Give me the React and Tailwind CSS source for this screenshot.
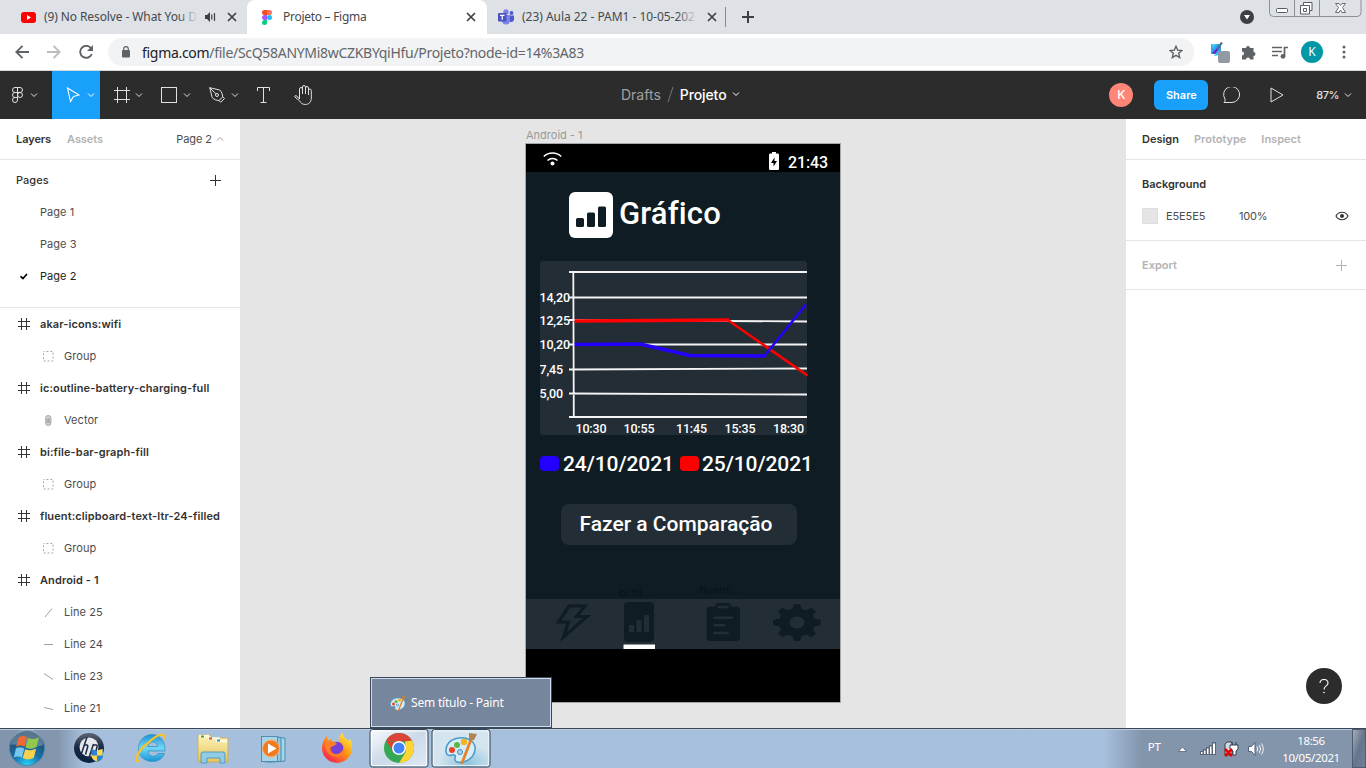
import React from "react";

function Icon({ box, className = "", children }) {
  const [, , w, h] = box.split(" ");
  return (
    <svg viewBox={box} width={w} height={h} fill="none" className={"block shrink-0 " + className}>
      {children}
    </svg>
  );
}

const Close = () => (
  <Icon box="0 0 10 10"><path d="M1 1l8 8M9 1l-8 8" stroke="#3c4043" strokeWidth="1.7" /></Icon>
);

const Chevron = ({ className = "" }) => (
  <Icon box="0 0 8 6" className={className}><path d="M1 1.5l3 3 3-3" stroke="currentColor" /></Icon>
);

const FigmaLogo = () => (
  <Icon box="0 0 10 15">
    <path d="M2.5 0H5v5H2.5a2.5 2.5 0 010-5z" fill="#f24e1e" />
    <path d="M5 0h2.5a2.5 2.5 0 010 5H5z" fill="#ff7262" />
    <path d="M2.5 5H5v5H2.5a2.5 2.5 0 010-5z" fill="#a259ff" />
    <circle cx="7.5" cy="7.5" r="2.5" fill="#1abcfe" />
    <path d="M2.5 10H5v2.5A2.5 2.5 0 112.5 10z" fill="#0acf83" />
  </Icon>
);

function TabStrip() {
  return (
    <div className="flex h-[34px] shrink-0 bg-[#dee1e6] font-['Noto_Sans',sans-serif] text-[12px] text-[#45494d]">
      <div className="flex w-[247px] shrink-0 items-center rounded-br-lg pl-[21px]">
        <Icon box="0 0 15 11">
          <rect width="15" height="11" rx="3" fill="#f00" />
          <path d="M6 3l4 2.5L6 8z" fill="#fff" />
        </Icon>
        <div className="relative ml-2 w-[154px] whitespace-nowrap tracking-[-0.1px]">
          (9) No Resolve - What You D
          <span className="absolute inset-y-0 right-0 w-5 bg-linear-to-r from-transparent to-[#dee1e6]" />
        </div>
        <Icon box="0 0 11 10" className="ml-[7px] mr-3">
          <path d="M0 3h2l3-3v10L2 7H0z" fill="#3c4043" />
          <path d="M6.8 2.5v5M9.5 1v8" stroke="#3c4043" strokeWidth="1.2" />
        </Icon>
        <div className="-ml-px"><Close /></div>
      </div>
      <div className="flex w-[240px] shrink-0 items-center rounded-t-lg bg-white pl-[15px]">
        <FigmaLogo />
        <div className="ml-[11px] w-[183px] whitespace-nowrap tracking-[-0.28px]">Projeto – Figma</div>
        <Close />
      </div>
      <div className="flex w-[239px] shrink-0 items-center rounded-bl-lg pl-[11px]">
        <Icon box="0 0 16 16">
          <circle cx="8" cy="3" r="2.7" fill="#7b83eb" />
          <circle cx="13.5" cy="4" r="1.9" fill="#5059c9" />
          <path d="M11 6.5h5V11a3 3 0 01-5 1z" fill="#5059c9" />
          <path d="M4 6h8v5.500a4 4 0 01-8 0z" fill="#7b83eb" />
          <rect y="4" width="8.500" height="8.500" rx="1" fill="#4b53bc" />
          <path d="M2 6.300h4.500M4.250 6.300V10.800" stroke="#fff" strokeWidth="1.200" />
        </Icon>
        <div className="relative ml-2 w-[175px] whitespace-nowrap tracking-[-0.03px]">
          (23) Aula 22 - PAM1 - 10-05-202
          <span className="absolute inset-y-0 right-0 w-5 bg-linear-to-r from-transparent to-[#dee1e6]" />
        </div>
        <div className="ml-[-7px] flex w-[26px] justify-center pl-[18px]"><Close /></div>
        <div className="ml-[9px] h-5 w-px shrink-0 bg-[#85898e]" />
      </div>
      <div className="flex flex-1 items-center pl-4">
        <Icon box="0 0 12 12"><path d="M6 0v12M0 6h12" stroke="#3c4043" strokeWidth="2" /></Icon>
        <Icon box="0 0 14 14" className="ml-auto">
          <circle cx="7" cy="7" r="7" fill="#3c4043" />
          <path d="M4 5h6L7 9.500z" fill="#fff" />
        </Icon>
        <Icon box="0 0 94 18" className="ml-[15px] mr-[3px] self-start">
          <path d="M.5-1v13.500a4 4 0 004 4H88a4 4 0 004-4V-1" stroke="#8c9096" />
          <path d="M25.500 0v16.500M50.500 0v16.500" stroke="#8c9096" />
          <rect x="7.500" y="8.500" width="11" height="4" rx="1" fill="#fff" stroke="#555b66" />
          <path d="M34.500 2.500h8.500v8h-2.500v3.500h-9V5.500h3z" fill="#fff" stroke="#555b66" />
          <path d="M34.500 5.500h6v5M34.500 8.500h3v3h-3z" stroke="#555b66" />
          <path d="M66.500 3.500h3.500l1.500 2 1.500-2h3.500l-3 4 3 5h-3.500l-1.500-2.500-1.500 2.500h-3.500l3-5z" fill="#fff" stroke="#666b74" />
        </Icon>
      </div>
    </div>
  );
}

function AddressBar() {
  return (
    <div className="flex h-[37px] shrink-0 items-center border-b border-[#d5d8db] bg-white pl-[15px] pr-[20px] font-['Noto_Sans',sans-serif]">
      <Icon box="0 0 14 14"><path d="M14 7H1.500M7.500 .8L1.300 7l6.200 6.200" stroke="#5f6368" strokeWidth="1.900" /></Icon>
      <Icon box="0 0 14 14" className="ml-[18px]"><path d="M0 7h12.500M6.500 .8L12.700 7l-6.200 6.200" stroke="#babcbe" strokeWidth="1.900" /></Icon>
      <Icon box="0 0 14 14" className="ml-[18px]">
        <path d="M12 3.200A6 6 0 1012.800 9" stroke="#5f6368" strokeWidth="1.900" />
        <path d="M14 0v6H8z" fill="#5f6368" />
      </Icon>
      <div className="ml-[15px] flex h-7 w-[1086px] shrink-0 items-center rounded-full bg-[#f1f3f4] pl-[14px] pr-[11px]">
        <Icon box="0 0 8 12">
          <rect y="4" width="8" height="7.500" rx="1" fill="#5f6368" />
          <path d="M1.700 4V3a2.300 2.300 0 014.600 0v1" stroke="#5f6368" strokeWidth="1.200" />
        </Icon>
        <div className="ml-[12px] whitespace-nowrap text-[14px] tracking-[-0.3px] text-[#62666b]">
          <span className="text-[#202124]">figma.com</span>/file/ScQ58ANYMi8wCZKBYqiHfu/Projeto?node-id=14%3A83
        </div>
        <Icon box="0 0 14 14" className="ml-auto"><path d="M7 1.300l1.700 3.800 4.200.4-3.200 2.800 1 4.200L7 10.300l-3.700 2.200 1-4.200L1.100 5.500l4.200-.4z" stroke="#5f6368" strokeWidth="1.400" /></Icon>
      </div>
      <Icon box="0 0 20 21" className="ml-[16px]">
        <rect x="1" y="2" width="10" height="10" fill="#2da7ee" />
        <path d="M2 11l6-6 3-1-6 8z" fill="#6627c9" />
        <path d="M1 2h6L3 6z" fill="#48c7fa" />
        <path d="M12 .5L7 7" stroke="#57718c" strokeWidth="2.200" />
        <path d="M4 14l4-5 1 4z" fill="#19c8f2" />
        <rect x="8" y="9" width="12" height="12" rx="2" fill="#929aa3" />
      </Icon>
      <Icon box="0 0 15 15" className="ml-[11px]"><path d="M1 3h4a2 2 0 114 0h3.500v4a2 2 0 110 4v3.500H9a2 2 0 10-4 0H1v-4a2 2 0 000-4z" fill="#5f6368" /></Icon>
      <Icon box="0 0 17 13" className="ml-[16px]">
        <path d="M0 1.500h10M0 5.500h10M0 9.500h6M12.500 10V1.500H16" stroke="#5f6368" strokeWidth="1.700" />
        <circle cx="11" cy="10.300" r="2.400" fill="#5f6368" />
      </Icon>
      <div className="ml-[12px] flex size-[22px] shrink-0 items-center justify-center rounded-full bg-[#0097a7] text-[12px] text-white">K</div>
      <Icon box="0 0 4 14" className="ml-auto">
        <circle cx="2" cy="2" r="1.500" fill="#5f6368" /><circle cx="2" cy="7" r="1.500" fill="#5f6368" /><circle cx="2" cy="12" r="1.500" fill="#5f6368" />
      </Icon>
    </div>
  );
}

function EditorBar() {
  return (
    <div className="flex h-12 shrink-0 items-center bg-[#2c2c2c] text-[#e0e0e0]">
      <div className="flex w-[52px] items-center pl-3">
        <Icon box="0 0 11 16"><path d="M5.500.5H3a2.500 2.500 0 000 5h2.500zM5.500.5H8a2.500 2.500 0 010 5H5.500zM5.500 5.500H3a2.500 2.500 0 000 5h2.500zM10.500 8a2.500 2.500 0 11-5 0 2.500 2.500 0 015 0zM5.500 10.500H3a2.500 2.500 0 102.500 2.500z" stroke="currentColor" /></Icon>
        <Chevron className="ml-[7px]" />
      </div>
      <div className="flex h-12 w-12 items-center bg-[#18a0fb] pl-[14px] text-white">
        <Icon box="0 0 14 16"><path d="M1.500 1l11.500 7-5.500 1.500L4.500 14.500z" stroke="currentColor" strokeWidth="1.100" /></Icon>
        <Chevron className="ml-[7px]" />
      </div>
      <div className="flex w-[45px] items-center pl-[14px]">
        <Icon box="0 0 16 16"><path d="M0 3.500h16M0 12.500h16M3.500 0v16M12.500 0v16" stroke="currentColor" /></Icon>
        <Chevron className="ml-[5px]" />
      </div>
      <div className="flex w-[48px] items-center pl-[16px]">
        <Icon box="0 0 16 16"><rect x=".5" y=".5" width="15" height="15" stroke="currentColor" /></Icon>
        <Chevron className="ml-[6px]" />
      </div>
      <div className="flex w-[49px] items-center pl-[16px]">
        <Icon box="0 0 16 16">
          <path d="M.7.7l10 2.300c2 2 2.800 4.200 3 7L10 13.500c-2.500 0-5-1-6.800-3zM.7.7l6.100 6.100M10 13.500l1.700 1.800 3.800-3.800-1.800-1.500" stroke="currentColor" />
          <circle cx="8" cy="8" r="1.500" stroke="currentColor" />
        </Icon>
        <Chevron className="ml-[6px]" />
      </div>
      <Icon box="0 0 13 16" className="ml-[15px]"><path d="M.5 4V.5h12V4M6.500.5v15M3.500 15.500h6" stroke="currentColor" /></Icon>
      <Icon box="0 0 18 20" className="ml-6"><path d="M5.500 11V4a1.500 1.500 0 013 0v5V2a1.500 1.500 0 013 0v7V3a1.500 1.500 0 013 0v7V5.500a1.400 1.400 0 012.800 0V13c0 4-2.500 6.500-6 6.500-3 0-4.500-1.500-6-4L.8 12c-.5-1.200 1-2 2-1l2.700 3z" stroke="currentColor" /></Icon>
      <div className="ml-[309px] flex items-center whitespace-nowrap pb-0.5 font-[Inter,sans-serif] text-[14px]">
        <span className="text-[#a0a0a0]">Drafts</span>
        <Icon box="0 0 7 17" className="mx-[6px]"><path d="M6 1L1 16" stroke="#777" /></Icon>
        <span className="font-medium tracking-[-0.1px] text-white">Projeto</span>
        <Chevron className="ml-[5px] text-white" />
      </div>
      <div className="ml-auto flex items-center pr-[14px] font-[Inter,sans-serif] text-[11px] font-medium">
        <div className="flex size-6 items-center justify-center rounded-full bg-[#ff8577] text-[12px] text-white">K</div>
        <div className="ml-[21px] flex h-[30px] w-[54px] items-center justify-center rounded-md bg-[#18a0fb] font-semibold text-white">Share</div>
        <Icon box="0 0 18 17" className="ml-[15px]"><path d="M1 15.500c1-1 1.300-2 1-3.500A8 8 0 119 15.500z" stroke="currentColor" /></Icon>
        <Icon box="0 0 14 16" className="ml-[29px]"><path d="M1 1v14l12-7z" stroke="currentColor" /></Icon>
        <span className="ml-[32px] tracking-[-0.5px]">87%</span>
        <Chevron className="ml-[5px]" />
      </div>
    </div>
  );
}

const Hash = () => (
  <Icon box="0 0 12 12"><path d="M0 3.500h12M0 8.500h12M3.500 0v12M8.500 0v12" stroke="#333" /></Icon>
);

const lineShapes = {
  "Line 25": "M2 10l7-8.500",
  "Line 24": "M1 5.500h9",
  "Line 23": "M1 2.500l9 6",
  "Line 21": "M1 4.500l9 2",
};

function LayerIcon({ name }) {
  if (name === "Group")
    return <Icon box="0 0 11 11"><rect x=".5" y=".5" width="9.500" height="9.500" stroke="#a8a8a8" strokeDasharray="2 1.900" strokeDashoffset="1" /></Icon>;
  if (name === "Vector")
    return (
      <Icon box="0 0 11 11">
        <rect x="2.700" y=".5" width="5.200" height="10" rx="2.500" fill="#d4d4d4" stroke="#a5a5a5" />
        <path d="M5.300 2.500V8M4 4.500h2.500v3H4z" stroke="#999" strokeWidth=".7" />
      </Icon>
    );
  return <Icon box="0 0 11 11"><path d={lineShapes[name]} stroke="#a0a0a0" /></Icon>;
}

const layers = [
  ["akar-icons:wifi", 0], ["Group", 1], ["ic:outline-battery-charging-full", 0], ["Vector", 1],
  ["bi:file-bar-graph-fill", 0], ["Group", 1], ["fluent:clipboard-text-ltr-24-filled", 0], ["Group", 1],
  ["Android - 1", 0], ["Line 25", 1], ["Line 24", 1], ["Line 23", 1], ["Line 21", 1],
];

function LeftPanel() {
  return (
    <aside className="flex w-60 shrink-0 flex-col overflow-hidden bg-white font-[Inter,sans-serif] text-[11px] tracking-[0.05px] text-[#4d4d4d]">
      <div className="flex h-[41px] shrink-0 items-center border-b border-[#e5e5e5] pl-4 pr-4 font-semibold tracking-[-0.08px]">
        <span className="text-[#333]">Layers</span>
        <span className="ml-4 text-[#b3b3b3]">Assets</span>
        <span className="ml-auto font-normal">Page 2</span>
        <Chevron className="ml-1 rotate-180 text-[#999]" />
      </div>
      <div className="h-[148px] shrink-0 border-b border-[#e5e5e5]">
        <div className="flex h-9 items-center justify-between pl-4 pr-[19px] pt-1 font-medium text-[#333]">
          Pages
          <Icon box="0 0 11 11"><path d="M5.500 0v11M0 5.500h11" stroke="#333" /></Icon>
        </div>
        {["Page 1", "Page 3", "Page 2"].map((page) => (
          <div key={page} className="flex h-8 items-center pl-5">
            <div className="w-5">
              {page === "Page 2" && <Icon box="0 0 9 7"><path d="M.5 3.300l2.400 2.200L7 1" stroke="#000" strokeWidth="1.700" /></Icon>}
            </div>
            <span className={page === "Page 2" ? "text-[#222]" : ""}>{page}</span>
          </div>
        ))}
      </div>
      <div className="shrink-0">
        {layers.map(([name, depth], i) => (
          <div key={i} className={"flex h-8 items-center whitespace-nowrap " + (depth ? "pl-[43px]" : "pl-[18px] font-semibold tracking-[0.11px] text-[#333]")}>
            {depth ? <LayerIcon name={name} /> : <Hash />}
            <span className="ml-[10px]">{name}</span>
          </div>
        ))}
      </div>
    </aside>
  );
}

function RightPanel() {
  return (
    <aside className="relative w-60 shrink-0 bg-white font-[Inter,sans-serif] text-[11px] tracking-[0px] text-[#4d4d4d]">
      <div className="flex h-[41px] items-center gap-[15px] border-b border-[#e5e5e5] pl-4 font-semibold text-[#b3b3b3]">
        <span className="text-[#333]">Design</span>
        <span>Prototype</span>
        <span>Inspect</span>
      </div>
      <div className="h-[81px] border-b border-[#e5e5e5] pl-4 pt-2">
        <div className="flex h-8 items-center font-semibold text-[#333]">Background</div>
        <div className="flex h-8 items-center">
          <div className="size-4 border border-[#dedede] bg-[#e5e5e5]" />
          <span className="ml-2 w-[73px] tracking-[-0.1px]">E5E5E5</span>
          <span className="tracking-[-0.2px]">100%</span>
          <Icon box="0 0 14 10" className="ml-auto mr-[17px]">
            <path d="M1 5c2.500-5 9.500-5 12 0-2.500 5-9.500 5-12 0z" stroke="#333" strokeWidth="1.100" />
            <circle cx="7" cy="5" r="2" fill="#333" />
          </Icon>
        </div>
      </div>
      <div className="flex h-[49px] items-center justify-between border-b border-[#e5e5e5] pl-4 pr-[19px] font-semibold text-[#b3b3b3]">
        Export
        <Icon box="0 0 11 11"><path d="M5.500 0v11M0 5.500h11" stroke="#b3b3b3" /></Icon>
      </div>
      <div className="absolute bottom-[24px] right-6 flex size-9 items-center justify-center rounded-full bg-[#2c2c2c] text-white">
        <Icon box="0 0 10 15">
          <path d="M1 4a4 3.500 0 118 0c0 3-4 2.700-4 6.500" stroke="#fff" strokeWidth="1.100" />
          <circle cx="5" cy="13.500" r=".8" fill="#fff" />
        </Icon>
      </div>
    </aside>
  );
}

function Chart() {
  const rows = [["14,20", 298], ["12,25", 321], ["10,20", 345], ["7,45", 370], ["5,00", 394]];
  const times = [["10:30", 575.5], ["10:55", 623.5], ["11:45", 676], ["15:35", 724.5], ["18:30", 773]];
  return (
    <svg viewBox="540 261 270 175" width="270" height="175" className="block font-[Roboto,sans-serif] text-[12.5px] font-medium">
      <rect x="540" y="261" width="267" height="174" rx="3" fill="#232d35" />
      <path d="M569 272H807M569 297.500H807M569 320L807 321.500M569 344.500H807M569 369.500L807 368.500M569 393.500L807 394.500M569 417H807M573.300 272L573.800 417" stroke="#f5f5f5" strokeWidth="1.800" fill="none" />
      <path d="M574.500 321L729 320" stroke="#f00" strokeWidth="3.600" />
      <path d="M727 319.500L807.500 375.500" stroke="#f00" strokeWidth="2.600" />
      <path d="M574.500 344.500L640 344L690 355.500L764.500 356" stroke="#2400ff" strokeWidth="3.400" fill="none" />
      <path d="M763.500 357L806 304.500" stroke="#2400ff" strokeWidth="2.600" />
      <g fill="#fff">
        {rows.map(([label, y]) => <text key={label} x="539.500" y={y + 4.300} textLength={label.length === 5 ? 30.5 : 23.5}>{label}</text>)}
        {times.map(([label, x]) => <text key={label} x={x} y="432.800" textLength="31">{label}</text>)}
      </g>
    </svg>
  );
}

const gearPath = (() => {
  const points = [];
  for (let tooth = 0; tooth < 8; tooth++) {
    for (const [offset, radius] of [[-14, 0.76], [-7, 1], [7, 1], [14, 0.76]]) {
      const angle = ((tooth * 45 + offset) * Math.PI) / 180;
      points.push(`${(797 + 23.5 * radius * Math.cos(angle)).toFixed(2)} ${(622.5 + 18 * radius * Math.sin(angle)).toFixed(2)}`);
    }
  }
  return `M${points.join("L")}ZM789 622.5a8 6.5 0 1 0 16 0a8 6.5 0 1 0 -16 0Z`;
})();

function NavIcons() {
  return (
    <svg viewBox="526 584 314 65" width="314" height="65" className="absolute bottom-0 left-0 font-[Inter,sans-serif] text-[11px]">
      <text x="619" y="597" fill="#09131a">bi:fil...</text>
      <text x="699" y="594" fill="#09131a">fluent:...</text>
      <rect x="526" y="599" width="314" height="50" fill="#232d35" />
      <path d="M569 606h16l-8.500 10.500H587L563.500 637l5-15H558.500z" stroke="#101c23" strokeWidth="3.200" fill="none" />
      <rect x="624" y="602" width="30" height="40" rx="4" fill="#101c23" />
      <path d="M629 625h5v7h-5zM636.500 620h5v12h-5zM644 615h5v17h-5z" fill="#232d35" />
      <rect x="623.500" y="644.500" width="31.500" height="4.500" fill="#fff" />
      <rect x="706.500" y="606.500" width="33.500" height="34.500" rx="4" fill="#101c23" />
      <rect x="715" y="603" width="16" height="7" rx="3.500" fill="#101c23" />
      <path d="M718.500 607h9M714.500 617.700h17.500M714.500 625.300h9.500M714.500 633h13" stroke="#232d35" strokeWidth="2.600" strokeLinecap="round" />
      <path fillRule="evenodd" fill="#101c23" stroke="#101c23" strokeWidth="1" strokeLinejoin="round" d={gearPath} />
    </svg>
  );
}

function Phone() {
  return (
    <div className="flex h-[558px] w-[314px] flex-col bg-black font-[Roboto,sans-serif] font-medium text-white outline outline-[#a4a8aa]">
      <div className="flex h-[27.5px] shrink-0 items-start pl-[17px] pr-[12px] pt-2">
        <Icon box="0 0 19 15">
          <path d="M.8 4.500a12.500 12.500 0 0117.400 0M4.500 8.500a7.500 7.500 0 0110 0" stroke="#fff" strokeWidth="1.500" />
          <circle cx="9.500" cy="11.500" r="2" fill="#fff" />
        </Icon>
        <Icon box="0 0 10 18" className="ml-auto">
          <path d="M3 0h4v1.500h1.500c1 0 1.500.5 1.500 1.500v13.500c0 1-.5 1.500-1.500 1.500h-7C.5 18 0 17.500 0 16.500V3c0-1 .5-1.500 1.500-1.500H3z" fill="#fff" />
          <path d="M5.500 5.500V9H8l-3.500 5.500V11H2z" fill="#000" />
        </Icon>
        <span className="ml-[9px] w-[40px] whitespace-nowrap pt-px text-[16px] leading-[20px] tracking-[-0.1px]">21:43</span>
      </div>
      <div className="relative h-[477px] shrink-0 bg-[#101c23] pt-5">
        <div className="ml-[43px] flex h-[46px] items-center">
          <Icon box="0 0 44 46">
            <rect width="44" height="46" rx="6" fill="#fff" />
            <rect x="7" y="26" width="8" height="9" rx="1.500" fill="#101c23" />
            <rect x="18" y="20.500" width="8" height="14.500" rx="1.500" fill="#101c23" />
            <rect x="29" y="14.500" width="8" height="20.500" rx="1.500" fill="#101c23" />
          </Icon>
          <span className="ml-[6px] pb-0.5 text-[31px] leading-none tracking-[0.15px]">Gráfico</span>
        </div>
        <div className="ml-[14px] mt-[23.5px]"><Chart /></div>
        <div className="ml-[13.5px] mt-[17px] flex h-[22px] items-center whitespace-nowrap text-[21px] tracking-[-0.1px]">
          <div className="mb-px h-[15px] w-[19px] shrink-0 rounded bg-[#2400ff]" />
          <span className="ml-[4.5px] w-[116.5px] pt-px">24/10/2021</span>
          <div className="mb-px h-[15px] w-[19px] shrink-0 rounded bg-[#f00]" />
          <span className="ml-[3.500px] pt-px">25/10/2021</span>
        </div>
        <div className="ml-[35px] mt-[29px] flex h-[41px] w-[236px] items-center justify-center rounded-lg bg-[#232d35] pr-[6px] pt-px text-[21px]">Fazer a Comparação</div>
        <NavIcons />
      </div>
    </div>
  );
}

function PaintGlyph({ size }) {
  return (
    <svg viewBox="0 0 32 32" width={size} height={size} fill="none" className="block shrink-0">
      <path d="M14 6C5 7 0 13 1 20c1 4 4 4 6 3 3-1 4 1 3 3-1 4 3 5 8 4 8-2 13-8 12-15-1-6-8-10-16-9z" fill="#d6ecf8" stroke="#479ac8" strokeWidth="1.500" />
      <circle cx="7" cy="18" r="3" fill="#e6432f" />
      <circle cx="12" cy="13" r="3" fill="#58b947" />
      <circle cx="19" cy="10" r="3.200" fill="#f4b327" />
      <circle cx="15" cy="20" r="2.500" fill="#a8d4ec" stroke="#428ab4" />
      <path d="M27 5L17 31" stroke="#e78227" strokeWidth="2.800" strokeLinecap="round" />
      <path d="M24 1l8 1-3 6-5 1z" fill="#b08355" />
    </svg>
  );
}

function Taskbar() {
  return (
    <div className="relative flex h-10 shrink-0 items-center border-t border-[#3b4656] bg-[linear-gradient(90deg,#8295ad_0px,#8496ae_58px,#a6bfdc_84px,#a7c0dd_1104px,#8295ab_1142px,#8495ab_1366px)] font-['Noto_Sans',sans-serif] text-white shadow-[inset_0_1px_0_#bdcde0]">
      <svg viewBox="0 729 500 39" width="500" height="39" fill="none" className="block shrink-0">
        <defs>
          <radialGradient id="orb" cx=".5" cy="1" r=".9"><stop stopColor="#28d7ff" /><stop offset=".45" stopColor="#1770a9" /><stop offset="1" stopColor="#234767" /></radialGradient>
          <linearGradient id="folder" x2="0" y2="1"><stop stopColor="#fcf3b6" /><stop offset="1" stopColor="#e5c560" /></linearGradient>
          <linearGradient id="fox" x1=".9" y1="0" x2=".1" y2="1"><stop stopColor="#fff44f" /><stop offset=".45" stopColor="#ff980e" /><stop offset="1" stopColor="#f20d60" /></linearGradient>
          <linearGradient id="hp" x2="0" y2="1"><stop stopColor="#5c6472" /><stop offset=".5" stopColor="#17273f" /><stop offset="1" stopColor="#092545" /></linearGradient>
          <linearGradient id="ie" x2="0" y2="1"><stop stopColor="#1e93d1" /><stop offset=".5" stopColor="#71d7f9" /><stop offset="1" stopColor="#1594d6" /></linearGradient>
          <linearGradient id="active" x2="1" y2="1"><stop stopColor="#fafcfe" /><stop offset=".5" stopColor="#ccd9e8" /><stop offset="1" stopColor="#dfeaf5" /></linearGradient>
          <radialGradient id="glow" cx=".6" cy=".9"><stop stopColor="#8dc4dd" /><stop offset="1" stopColor="#d5e5f0" /></radialGradient>
        </defs>
        <circle cx="27" cy="748" r="17.500" fill="url(#orb)" stroke="#4e86a8" />
        <path d="M11 745a16 16 0 0132 0c-8 4-24-2-32 0z" fill="#fff" opacity=".25" />
        <path d="M18.500 738c3-2.500 6-2.500 8.500-.7l-2.500 9.700c-3-2-5.500-2-8.500-.2z" fill="#ef6a35" />
        <path d="M28 737.800c3.500 2 7.500 1.500 11-.8l-2.500 10c-3.500 2-7.500 2.500-11 .6z" fill="#91c74c" />
        <path d="M16 748.300c3-1.500 5.500-1.500 8.300.4l-2.500 8.800c-3-1.500-5.500-1.500-8 .2z" fill="#78c7ef" />
        <path d="M25.200 749.300c3.500 1.700 7.300 1.300 11-.7l-2.400 9.200c-3.800 2-7.500 2.300-11 .3z" fill="#f7d04c" />

        <circle cx="89" cy="748" r="15" fill="url(#hp)" />
        <circle cx="89" cy="747" r="9.500" fill="#e5e8ed" />
        <path d="M87 737l-6 18M84 745h2.500c1.500 0 1.500 1 1 2.500l-2 7M93.500 744l-5 15M93 745h3c1.500 0 1.300 1 1 2.300l-1.200 4c-.4 1.400-1 2-2.500 2h-3" stroke="#1d2b42" strokeWidth="1.500" />
        <path d="M97 751l6-2v7c0 3-3 5-6 6-3-1-5.500-3-5.500-6v-7z" fill="#2c83d3" />
        <path d="M97 750.500l5.500-1.500v6.500H97zM91.500 755.500H97v6c-3-1-5.500-3-5.500-6z" fill="#ffd84b" />

        <path d="M165 751h-17c.5 6 8 7 10 2.500h6.500c-2 5-6 8-12 8-8 0-14-5-14-13 0-8 6-14 13.500-14 8.500 0 13.500 7 13 16.500zm-17-4.500h9.500c-.5-6-8.500-6-9.500 0z" fill="url(#ie)" stroke="#2e8fc0" strokeWidth=".7" />
        <path d="M140 761c-8 2-1-12 8-18 8-8 18-12 16-4" stroke="#f4c229" strokeWidth="2.300" />

        <path d="M199 735h11l2 3h16v24h-30v-25z" fill="url(#folder)" stroke="#c8a950" strokeWidth=".8" />
        <path d="M199 736h10M208 738.500h12M216 741h11" stroke="#fffbe0" strokeWidth="2.500" />
        <path d="M201 736.500h3" stroke="#3fa735" strokeWidth="2" /><path d="M209 738.500h3" stroke="#d94a34" strokeWidth="2" /><path d="M217 740.500h3" stroke="#2c8ed6" strokeWidth="2" />
        <path d="M201 763v-9a2 2 0 012-2h20a2 2 0 012 2v9h-5v-5h-13v5z" fill="#91cce5" stroke="#5899bc" />

        <path d="M269 737l16 1v23l-16 1z" fill="#a8d4e8" stroke="#4b8fb3" />
        <path d="M265 736.500l16 1v24l-16 .5z" fill="#94c9e0" stroke="#4389af" />
        <rect x="261.500" y="736.500" width="16" height="25" fill="#a9d3e7" stroke="#4c8fb3" />
        <circle cx="271" cy="748.500" r="8.500" fill="#f27b22" stroke="#f8b477" />
        <path d="M268 743.500l8.500 5-8.500 5z" fill="#fff" />

        <path d="M322 748c0-5 2-9 5-12l1 5 4-3v5l7-1c-1-4 1-7 4-9 0 4 3 5 5 8l2-2c2 3 2 5 2 9a15 15 0 01-30 0z" fill="url(#fox)" />
        <circle cx="337" cy="748" r="6.300" fill="#7540d8" />
        <path d="M325 740c4 1 8 0 12 4-3 1-4 3-7 3-2 6 5 9 10 6 3-2 4-5 3-8 4 8-1 12-7 12-8-1-12-8-11-17z" fill="#ff7f22" />

        <rect x="370" y="729.500" width="58" height="37.500" rx="2.500" fill="url(#active)" stroke="#344858" />
        <rect x="371.500" y="731" width="55" height="34.500" rx="1.500" stroke="#fff" opacity=".8" />
        <circle cx="399" cy="748" r="15" fill="#34a853" />
        <path d="M386 740.500A15 15 0 01412 740.500L399 742z" fill="#db4437" />
        <path d="M412 740.500A15 15 0 01399 763l7-11.500-1-10z" fill="#fdd335" />
        <path d="M386 740.500l7 11 3-9z" fill="#db4437" />
        <circle cx="399" cy="748" r="7" fill="#fff" /><circle cx="399" cy="748" r="5.500" fill="#4285f4" />

        <rect x="432" y="729.500" width="58" height="37.500" rx="2.500" fill="url(#glow)" stroke="#344858" />
        <rect x="433.500" y="731" width="55" height="34.500" rx="1.500" stroke="#eff8fe" opacity=".8" />
        <svg x="445" y="732" width="32" height="32"><PaintGlyph size={32} /></svg>
      </svg>
      <div className="ml-auto flex h-full items-center">
        <span className="mr-[16px] -mt-1 text-[11.5px]">PT</span>
        <Icon box="0 0 11 7" className="mr-[12px] mt-[1px]"><path d="M5.500 1L9.500 5.500h-8z" fill="#fff" stroke="#56657a" strokeWidth=".8" /></Icon>
        <Icon box="0 0 16 13" className="mr-[8px]">
          <path d="M0 9h3v4H0zM3 7h3v6H3zM6 5h3v8H6zM9 3h3v10H9zM12 0h4v13h-4z" fill="#5a6779" />
          <path d="M1 10h1.500v2H1zM4 8.500h1.500V12H4zM7 6.500h1.500V12H7zM10 4.500h1.500V12H10zM13 1.500h2V12h-2z" fill="#fff" />
        </Icon>
        <Icon box="0 0 15 16" className="mr-[9px]">
          <path d="M1 3l2-2h5v13H1z" fill="#d4dae3" stroke="#333f4f" />
          <path d="M6 4h8v4l-2 2v4H9v-4L6 8zM8 1v3M12 1v3" fill="#fff" stroke="#333f4f" />
          <path d="M1 8l7 7M8 8l-7 7" stroke="#e90000" strokeWidth="2.500" />
        </Icon>
        <Icon box="0 0 16 14" className="mr-[18px]">
          <path d="M.5 4.500h3l3.500-4v13l-3.500-4h-3z" fill="#fff" stroke="#526177" />
          <path d="M9 4.500q1.500 2.500 0 5M11.300 3q2.500 4 0 8M13.500 1.500q3.500 5.500 0 11" stroke="#f3f5f8" />
        </Icon>
        <div className="w-[58px] whitespace-nowrap text-center text-[11.5px] leading-[17px] tracking-[-0.35px]">
          <div>18:56</div>
          <div>10/05/2021</div>
        </div>
        <div className="ml-[12px] h-full w-[14px] border border-[#4f5c6e] bg-linear-to-br from-[#a3afbf] via-[#65758a] to-[#718097]" />
      </div>
      <div className="absolute bottom-10 left-[370px] flex h-[51px] w-[182px] items-center border border-[#3c485a] bg-[#76869c] pl-[19px] text-[12px] shadow-[inset_0_0_0_1px_#cfdeee]">
        <PaintGlyph size={16} />
        <span className="ml-[5px] whitespace-nowrap tracking-[-0.2px]">Sem título - Paint</span>
      </div>
    </div>
  );
}

export default function App() {
  return (
    <div className="flex h-screen w-full flex-col overflow-hidden">
      <TabStrip />
      <AddressBar />
      <EditorBar />
      <div className="flex min-h-0 flex-1">
        <LeftPanel />
        <main className="flex-1 bg-[#e5e5e5] pl-[286px] pt-[9px]">
          <div className="flex h-4 items-start font-[Inter,sans-serif] text-[11px] leading-[14px] tracking-[0px] text-[#999]">Android - 1</div>
          <Phone />
        </main>
        <RightPanel />
      </div>
      <Taskbar />
    </div>
  );
}
